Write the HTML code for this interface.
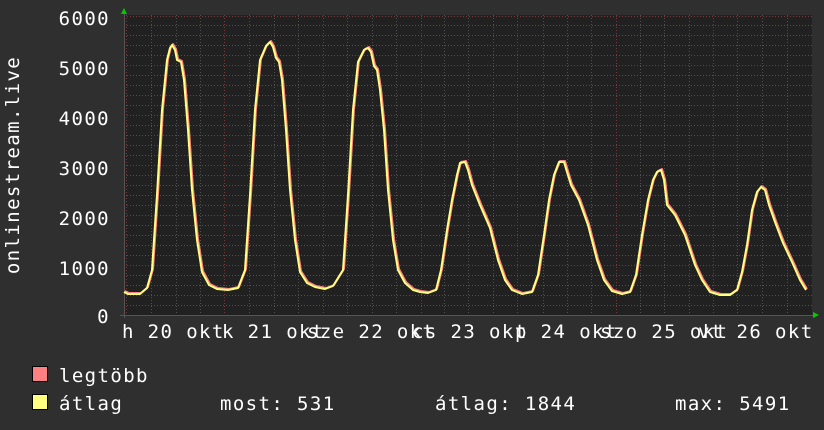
<!DOCTYPE html>
<html><head><meta charset="utf-8"><style>
html,body{margin:0;padding:0;background:#2f2f2f;}
svg{display:block}
text{font-family:"DejaVu Sans Mono","Liberation Mono",monospace;fill:#fff;font-size:19px;letter-spacing:1.4px}
</style></head><body>
<svg width="824" height="430" viewBox="0 0 824 430" xmlns="http://www.w3.org/2000/svg">
<rect width="824" height="430" fill="#2f2f2f"/>
<rect x="124" y="15" width="688" height="300" fill="#212121"/>
<g stroke="#505050" stroke-width="1" stroke-dasharray="1,2">
<path d="M124 25.5H812M124 35.5H812M124 45.5H812M124 55.5H812M124 75.5H812M124 85.5H812M124 95.5H812M124 105.5H812M124 125.5H812M124 135.5H812M124 145.5H812M124 155.5H812M124 175.5H812M124 185.5H812M124 195.5H812M124 205.5H812M124 225.5H812M124 235.5H812M124 245.5H812M124 255.5H812M124 275.5H812M124 285.5H812M124 295.5H812M124 305.5H812"/>
<path d="M151.5 15V315M176.5 15V315M200.5 15V315M249.5 15V315M274.5 15V315M298.5 15V315M347.5 15V315M372.5 15V315M396.5 15V315M444.5 15V315M468.5 15V315M493.5 15V315M543.5 15V315M567.5 15V315M591.5 15V315M640.5 15V315M664.5 15V315M689.5 15V315M737.5 15V315M762.5 15V315M787.5 15V315"/>
</g>
<g stroke="#7a3838" stroke-width="1" stroke-dasharray="1,2">
<path d="M124 16.5H812M124 65.5H812M124 115.5H812M124 165.5H812M124 215.5H812M124 265.5H812"/>
<path d="M126.5 15V315M224.5 15V315M323.5 15V315M421.5 15V315M517.5 15V315M616.5 15V315M713.5 15V315"/>
</g>
<line x1="120" y1="315.5" x2="814" y2="315.5" stroke="#555"/>
<line x1="124.5" y1="12" x2="124.5" y2="318" stroke="#555"/>
<polygon points="121,14 127,14 124,8" fill="#00cc00"/>
<polygon points="813,312 813,318 819,315" fill="#00cc00"/>
<g fill="none" stroke-linejoin="round">
<polyline id="c" stroke="#ff8080" stroke-width="2" transform="translate(1,-1)" points="124,292 128,294 140,294 147,288 152,270 157,195 162,110 167,60 170,48 172,45 175,50 177,60 181,62 184,80 188,130 192,190 197,240 202,272 209,285 217,289 228,290 238,288 245,270 250,195 255,110 260,60 266,46 270,42 273,47 276,58 279,62 282,80 286,130 290,190 295,240 300,272 307,283 315,287 325,289 333,286 343,270 348,195 353,110 358,62 364,50 368,48 371,52 374,66 377,70 380,90 384,130 388,190 393,240 398,270 405,283 413,290 420,292 428,293 436,290 441,270 447,230 452,200 457,175 460,163 465,162 468,170 472,185 480,205 490,228 498,260 505,280 512,290 522,294 532,292 538,275 544,235 549,200 554,175 559,162 564,162 567,172 571,185 579,200 588,225 597,260 604,280 612,291 622,294 630,292 636,275 642,235 648,200 653,180 657,172 661,170 664,180 667,205 675,215 685,235 695,265 702,280 710,292 720,295 730,295 737,290 742,272 747,245 752,210 757,192 761,187 765,190 769,205 775,222 783,243 792,262 800,280 806,290"/>
<polyline stroke="#ffff80" stroke-width="2" points="124,292 128,294 140,294 147,288 152,270 157,195 162,110 167,60 170,48 172,45 175,50 177,60 181,62 184,80 188,130 192,190 197,240 202,272 209,285 217,289 228,290 238,288 245,270 250,195 255,110 260,60 266,46 270,42 273,47 276,58 279,62 282,80 286,130 290,190 295,240 300,272 307,283 315,287 325,289 333,286 343,270 348,195 353,110 358,62 364,50 368,48 371,52 374,66 377,70 380,90 384,130 388,190 393,240 398,270 405,283 413,290 420,292 428,293 436,290 441,270 447,230 452,200 457,175 460,163 465,162 468,170 472,185 480,205 490,228 498,260 505,280 512,290 522,294 532,292 538,275 544,235 549,200 554,175 559,162 564,162 567,172 571,185 579,200 588,225 597,260 604,280 612,291 622,294 630,292 636,275 642,235 648,200 653,180 657,172 661,170 664,180 667,205 675,215 685,235 695,265 702,280 710,292 720,295 730,295 737,290 742,272 747,245 752,210 757,192 761,187 765,190 769,205 775,222 783,243 792,262 800,280 806,290"/>
</g>
<g text-anchor="end">
<text x="110" y="25">6000</text>
<text x="110" y="75">5000</text>
<text x="110" y="125">4000</text>
<text x="110" y="175">3000</text>
<text x="110" y="225">2000</text>
<text x="110" y="275">1000</text>
<text x="110" y="323">0</text>
</g>
<text transform="translate(19,165) rotate(-90)" text-anchor="middle">onlinestream.live</text>
<g>
<text x="122" y="338">h 20 okt</text>
<text x="222" y="338">k 21 okt</text>
<text x="307" y="338">sze 22 okt</text>
<text x="412" y="338">cs 23 okt</text>
<text x="515" y="338">p 24 okt</text>
<text x="600" y="338">szo 25 okt</text>
<text x="698" y="338">vt 26 okt</text>
</g>
<rect x="32.5" y="366.5" width="15" height="15" fill="#ff8080" stroke="#000"/>
<rect x="32.5" y="394.5" width="15" height="15" fill="#ffff80" stroke="#000"/>
<text x="59" y="382">legtöbb</text>
<text x="59" y="410">átlag</text>
<text x="220" y="410">most: 531</text>
<text x="435" y="410">átlag: 1844</text>
<text x="675" y="410">max: 5491</text>
</svg>
</body></html>
